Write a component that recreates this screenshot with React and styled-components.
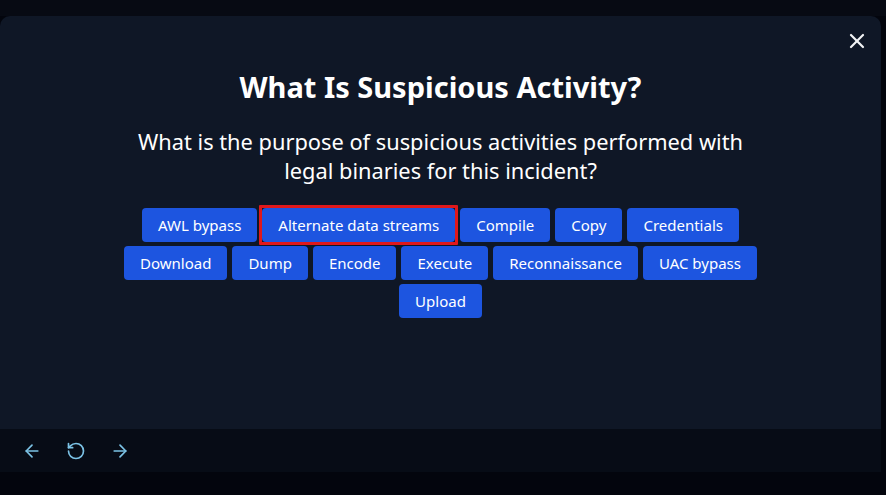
import React from "react"
import styled, { createGlobalStyle } from "styled-components"
import { ArrowLeft, ArrowRight, RotateCcw, X } from "lucide-react"

const Global = createGlobalStyle`
  html, body {
    margin: 0;
    padding: 0;
    background: #03050d;
    font-family: "Noto Sans", "Open Sans", "DejaVu Sans", sans-serif;
  }
`

const Page = styled.div`
  width: 886px;
  height: 495px;
  padding-top: 16px;
  box-sizing: border-box;
  background: linear-gradient(#070a13 0, #070a13 16px, #03050d 16px);
`

const Modal = styled.div`
  width: 881px;
  display: flex;
  flex-direction: column;
`

const Body = styled.div`
  position: relative;
  height: 413px;
  background: #0f1726;
  border-radius: 10px 10px 0 0;
  display: flex;
  flex-direction: column;
  align-items: center;
  padding-top: 51px;
  box-sizing: border-box;
`

const Close = styled.button`
  position: absolute;
  top: 13px;
  right: 12px;
  background: none;
  border: 0;
  padding: 0;
  color: #f3f4f6;
  display: flex;
`

const Title = styled.h1`
  margin: 0;
  color: #ffffff;
  font-size: 29px;
  font-weight: 700;
  line-height: 40px;
`

const Question = styled.p`
  margin: 20px 0 0;
  width: 640px;
  text-align: center;
  color: #ffffff;
  font-size: 21.8px;
  line-height: 29px;
`

const Options = styled.div`
  margin-top: 23px;
  width: 640px;
  display: flex;
  flex-wrap: wrap;
  justify-content: center;
  gap: 4px 5px;
`

const Option = styled.button`
  position: relative;
  height: 34px;
  padding: 0 16px;
  border: 0;
  border-radius: 4px;
  background: #1d55e0;
  color: #ffffff;
  font-family: inherit;
  font-size: 15px;
  outline: none;

  &::after {
    content: "";
    display: ${(p) => (p.$selected ? "block" : "none")};
    position: absolute;
    inset: -3px;
    border: 3px solid #e0181b;
    border-radius: 1px;
  }
`

const Footer = styled.div`
  height: 43px;
  background: #070c16;
  display: flex;
  align-items: center;
  gap: 24px;
  padding-left: 22px;
  color: #7cc3e6;
`

const options = [
  "AWL bypass",
  "Alternate data streams",
  "Compile",
  "Copy",
  "Credentials",
  "Download",
  "Dump",
  "Encode",
  "Execute",
  "Reconnaissance",
  "UAC bypass",
  "Upload",
]

const App = () => {
  return (
    <Page>
      <Global />
      <Modal>
        <Body>
          <Close>
            <X size={24} strokeWidth={2.2} />
          </Close>
          <Title>What Is Suspicious Activity?</Title>
          <Question>
            What is the purpose of suspicious activities performed with legal
            binaries for this incident?
          </Question>
          <Options>
            {options.map((o) => (
              <Option key={o} $selected={o === "Alternate data streams"}>
                {o}
              </Option>
            ))}
          </Options>
        </Body>
        <Footer>
          <ArrowLeft size={20} strokeWidth={2} />
          <RotateCcw size={20} strokeWidth={2} />
          <ArrowRight size={20} strokeWidth={2} />
        </Footer>
      </Modal>
    </Page>
  )
}

export default App
